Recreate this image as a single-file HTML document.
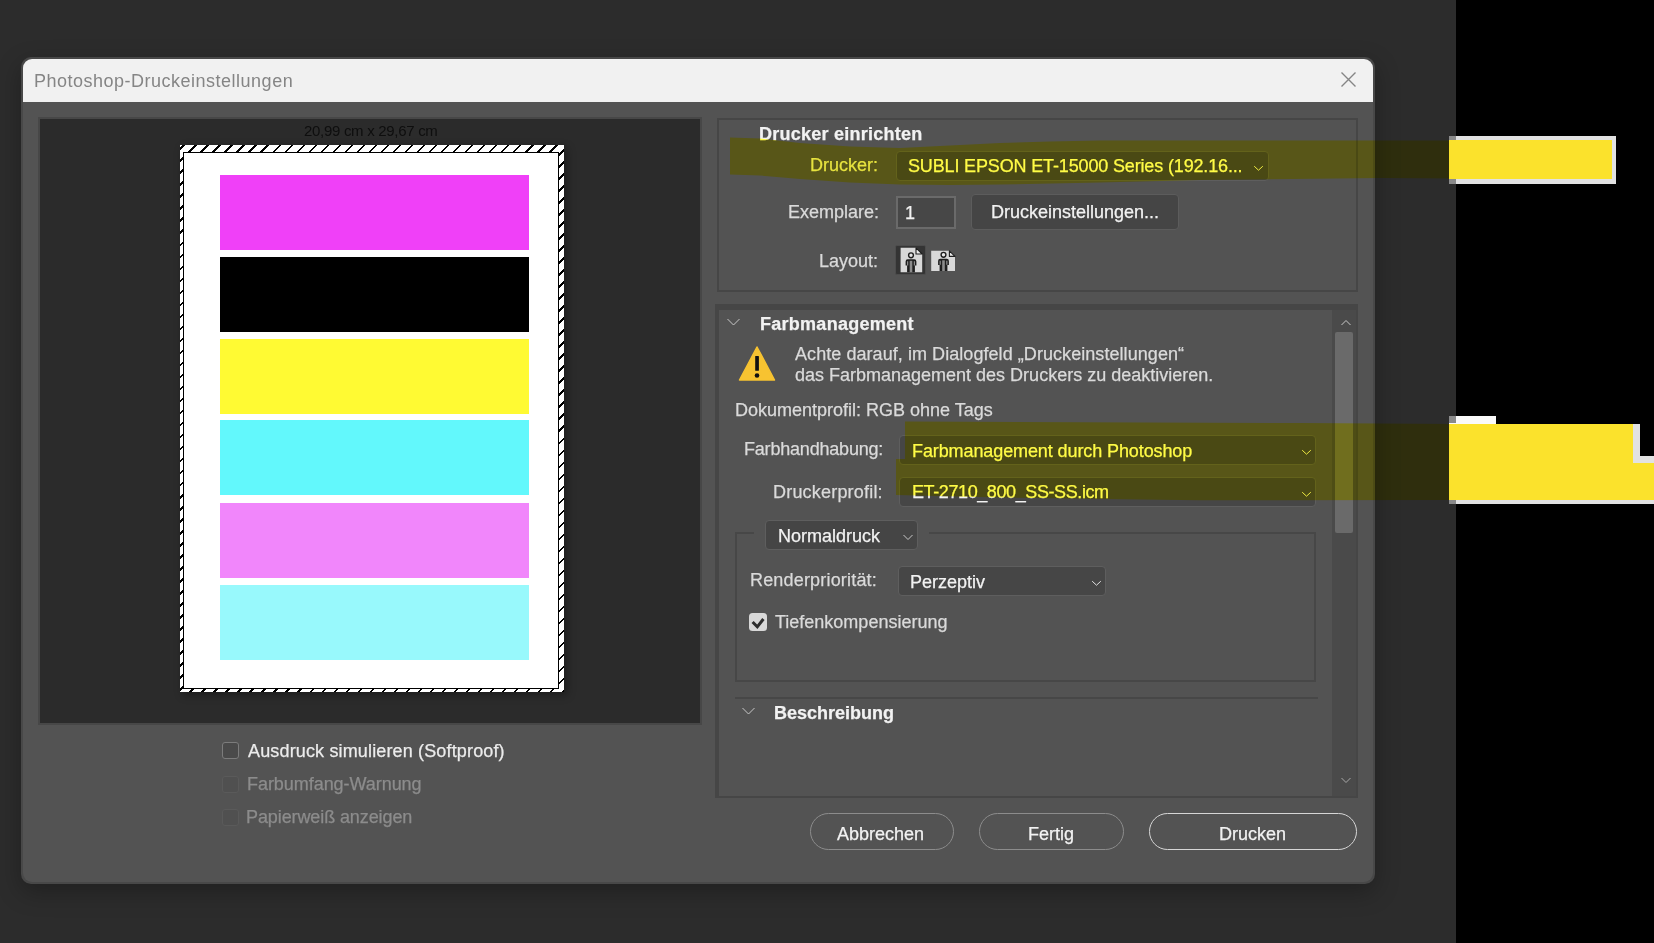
<!DOCTYPE html>
<html><head><meta charset="utf-8">
<style>
*{margin:0;padding:0;box-sizing:border-box}
html,body{width:1654px;height:943px;overflow:hidden;background:#2b2b2b;font-family:"Liberation Sans",sans-serif;position:relative}
.a{position:absolute}
.t{position:absolute;font-size:18px;line-height:20px;white-space:nowrap;color:#dadada;-webkit-text-stroke:0.25px currentColor}
.b{font-weight:700;color:#f2f2f2}
.sel{position:absolute;background:#464646;border:1px solid #5e5e5e;border-radius:4px}
.pill{position:absolute;border:1px solid #8c8c8c;border-radius:19px}
.cb{position:absolute;width:17px;height:17px;border:1.5px solid #7c7c7c;border-radius:3px;background:#4a4a4a}
</style></head><body>
<!-- background areas -->
<div class="a" style="left:0;top:0;width:1456px;height:943px;background:#2c2c2c"></div>
<div class="a" style="left:1456px;top:0;width:198px;height:943px;background:#000"></div>

<!-- dialog -->
<div class="a" style="left:21px;top:57px;width:1354px;height:827px;background:#484848;border-radius:10px;box-shadow:0 8px 24px rgba(0,0,0,0.28)"></div>
<div class="a" style="left:23px;top:59px;width:1350px;height:823px;background:#535353;border-radius:9px;overflow:hidden">
  <div class="a" style="left:0;top:0;width:1350px;height:43px;background:#f1f1f1"></div>
</div>
<div class="t" style="left:34px;top:71px;color:#858585;letter-spacing:0.5px;-webkit-text-stroke:0">Photoshop-Druckeinstellungen</div>
<svg class="a" style="left:1338px;top:69px" width="21" height="21" viewBox="0 0 21 21"><path d="M3.5 3.5L17.5 17.5M17.5 3.5L3.5 17.5" stroke="#858585" stroke-width="1.4"/></svg>

<!-- preview -->
<div class="a" style="left:38px;top:117px;width:664px;height:608px;background:#474747"></div>
<div class="a" style="left:40px;top:119px;width:660px;height:604px;background:#2b2b2b"></div>
<div class="t" style="left:304px;top:121px;font-size:15px;color:#0e0e0e;letter-spacing:-0.3px;-webkit-text-stroke:0">20,99 cm x 29,67 cm</div>
<div class="a" style="left:180px;top:145px;width:384px;height:547px;box-shadow:3px 3px 8px rgba(0,0,0,0.35)"></div>
<div class="a" style="left:180px;top:145px;width:384px;height:547px;background:repeating-linear-gradient(-45deg,#000 0,#000 1.8px,#fff 1.8px,#fff 8.5px)"></div>
<div class="a" style="left:183px;top:152px;width:376px;height:537px;background:#fff;border:1px solid #000"></div>
<div class="a" style="left:220px;top:175px;width:309px;height:75px;background:#f040f8"></div>
<div class="a" style="left:220px;top:257px;width:309px;height:75px;background:#000"></div>
<div class="a" style="left:220px;top:339px;width:309px;height:75px;background:#fffa33"></div>
<div class="a" style="left:220px;top:420px;width:309px;height:75px;background:#62f8fc"></div>
<div class="a" style="left:220px;top:503px;width:309px;height:75px;background:#f186fb"></div>
<div class="a" style="left:220px;top:585px;width:309px;height:75px;background:#98f9fc"></div>

<!-- checkboxes left -->
<div class="cb" style="left:222px;top:742px"></div>
<div class="t" style="left:248px;top:741px;color:#ececec;letter-spacing:0.15px">Ausdruck simulieren (Softproof)</div>
<div class="cb" style="left:222px;top:776px;border-color:#5a5a5a;background:#505050"></div>
<div class="t" style="left:247px;top:774px;color:#8c8c8c;letter-spacing:-0.05px">Farbumfang-Warnung</div>
<div class="cb" style="left:222px;top:809px;border-color:#5a5a5a;background:#505050"></div>
<div class="t" style="left:246px;top:807px;color:#8c8c8c;letter-spacing:-0.1px">Papierweiß anzeigen</div>

<!-- panel 1 -->
<div class="a" style="left:717px;top:118px;width:641px;height:174px;border:2px solid #464646"></div>
<div class="t b" style="left:759px;top:124px;letter-spacing:0.25px">Drucker einrichten</div>
<div class="t" style="left:810px;top:155px">Drucker:</div>
<div class="sel" style="left:896px;top:151px;width:373px;height:30px"></div>
<div class="t" style="left:908px;top:156px;color:#f2f2f2;letter-spacing:-0.15px">SUBLI EPSON ET-15000 Series (192.16...</div>
<svg class="a" style="left:1253px;top:164px" width="12" height="8"><path d="M1.2 2.2L5.5 6.2L9.8 2.2" stroke="#e2e2e2" stroke-width="1" fill="none"/></svg>
<div class="t" style="left:788px;top:202px">Exemplare:</div>
<div class="a" style="left:896px;top:196px;width:60px;height:33px;border:2px solid #6a6a6a;background:#474747"></div>
<div class="t" style="left:905px;top:203px;color:#f2f2f2">1</div>
<div class="a" style="left:971px;top:194px;width:208px;height:36px;background:#454545;border:1px solid #5c5c5c;border-radius:4px"></div>
<div class="t" style="left:991px;top:202px;color:#f2f2f2">Druckeinstellungen...</div>
<div class="t" style="left:819px;top:251px">Layout:</div>
<!-- layout icons -->
<svg class="a" style="left:895px;top:245px" width="62" height="31" viewBox="0 0 62 31">
  <rect x="0.5" y="0.5" width="30" height="29" rx="1.5" fill="#343434" stroke="#4c4c4c"/>
  <path d="M5.6 2.8H21L27.2 9V27.2H5.6Z" fill="#d8d8d8"/>
  <path d="M21 2.8L27.2 9H21Z" fill="#ececec" stroke="#1e1e1e" stroke-width="1.1" stroke-linejoin="round"/>
  <circle cx="16" cy="10.3" r="2.4" fill="#e6e6e6" stroke="#1e1e1e" stroke-width="1.4"/>
  <path d="M10.6 20.6V16.4Q10.6 14.3 12.7 14.3H19.3Q21.4 14.3 21.4 16.4V20.6H19.9V27.2H12.1V20.6Z" fill="#1e1e1e"/>
  <path d="M12.1 16.2H13.2V20.4H12.1Z M18.8 16.2H19.9V20.4H18.8Z" fill="#9a9a9a"/>
  <path d="M14.7 15.8H17.3V27.2H14.7Z" fill="#8c8c8c"/>
  <path d="M36.2 5.8H54.4L60 11.4V26H36.2Z" fill="#d8d8d8"/>
  <path d="M54.4 5.8L60 11.4H54.4Z" fill="#ececec" stroke="#1e1e1e" stroke-width="1.1" stroke-linejoin="round"/>
  <circle cx="48.5" cy="9.8" r="2.4" fill="#e6e6e6" stroke="#1e1e1e" stroke-width="1.4"/>
  <path d="M43.1 20V15.9Q43.1 13.8 45.2 13.8H51.8Q53.9 13.8 53.9 15.9V20H52.4V26H44.6V20Z" fill="#1e1e1e"/>
  <path d="M44.6 15.7H45.7V19.8H44.6Z M51.3 15.7H52.4V19.8H51.3Z" fill="#9a9a9a"/>
  <path d="M47.2 15.3H49.8V26H47.2Z" fill="#8c8c8c"/>
</svg>

<!-- panel 2 -->
<div class="a" style="left:715px;top:304px;width:643px;height:494px;background:#464646"></div>
<div class="a" style="left:719px;top:310px;width:637px;height:486px;background:#535353"></div>
<div class="a" style="left:1332px;top:310px;width:24px;height:486px;background:#4a4a4a"></div>
<svg class="a" style="left:1340px;top:319px" width="12" height="8"><path d="M1.5 6L6 1.5L10.5 6" stroke="#c8c8c8" stroke-width="1" fill="none"/></svg>
<div class="a" style="left:1335px;top:332px;width:18px;height:201px;background:#6a6a6a;border-radius:2px"></div>
<svg class="a" style="left:1340px;top:776px" width="12" height="8"><path d="M1.5 2L6 6.5L10.5 2" stroke="#a8a8a8" stroke-width="1" fill="none"/></svg>

<svg class="a" style="left:726px;top:317px" width="15" height="10"><path d="M1.5 2L7.5 8L13.5 2" stroke="#c8c8c8" stroke-width="1" fill="none"/></svg>
<div class="t b" style="left:760px;top:314px;letter-spacing:0.27px">Farbmanagement</div>
<svg class="a" style="left:738px;top:346px" width="38" height="36" viewBox="0 0 38 36">
  <path d="M19 1L36.5 34H1.5Z" fill="#f7c331" stroke="#f7c331" stroke-width="1.5" stroke-linejoin="round"/>
  <rect x="17.2" y="10" width="3.7" height="14.8" fill="#111" rx="0.5"/>
  <circle cx="19" cy="29.5" r="2.3" fill="#111"/>
</svg>
<div class="t" style="left:795px;top:344px;letter-spacing:0.06px">Achte darauf, im Dialogfeld „Druckeinstellungen“</div>
<div class="t" style="left:795px;top:365px">das Farbmanagement des Druckers zu deaktivieren.</div>
<div class="t" style="left:735px;top:400px">Dokumentprofil: RGB ohne Tags</div>

<div class="t" style="left:744px;top:439px;letter-spacing:-0.2px">Farbhandhabung:</div>
<div class="sel" style="left:899px;top:435px;width:417px;height:30px"></div>
<div class="t" style="left:912px;top:441px;color:#f2f2f2;letter-spacing:-0.1px">Farbmanagement durch Photoshop</div>
<svg class="a" style="left:1301px;top:448px" width="12" height="8"><path d="M1.2 2.2L5.5 6.2L9.8 2.2" stroke="#e2e2e2" stroke-width="1" fill="none"/></svg>
<div class="t" style="left:773px;top:482px;letter-spacing:0.2px">Druckerprofil:</div>
<div class="sel" style="left:899px;top:477px;width:417px;height:30px"></div>
<div class="t" style="left:912px;top:482px;color:#f2f2f2;letter-spacing:-0.4px">ET-2710_800_SS-SS.icm</div>
<svg class="a" style="left:1301px;top:490px" width="12" height="8"><path d="M1.2 2.2L5.5 6.2L9.8 2.2" stroke="#e2e2e2" stroke-width="1" fill="none"/></svg>

<!-- group box -->
<div class="a" style="left:735px;top:532px;width:581px;height:150px;border:2px solid #474747"></div>
<div class="a" style="left:754px;top:530px;width:175px;height:6px;background:#535353"></div>
<div class="sel" style="left:765px;top:520px;width:153px;height:30px;background:#454545"></div>
<div class="t" style="left:778px;top:526px;color:#f2f2f2">Normaldruck</div>
<svg class="a" style="left:902px;top:533px" width="12" height="8"><path d="M1.5 2L6 6.5L10.5 2" stroke="#c8c8c8" stroke-width="1" fill="none"/></svg>
<div class="t" style="left:750px;top:570px;letter-spacing:0.18px">Renderpriorität:</div>
<div class="sel" style="left:898px;top:566px;width:208px;height:30px"></div>
<div class="t" style="left:910px;top:572px;color:#f2f2f2">Perzeptiv</div>
<svg class="a" style="left:1091px;top:579px" width="12" height="8"><path d="M1.2 2.2L5.5 6.2L9.8 2.2" stroke="#e2e2e2" stroke-width="1" fill="none"/></svg>
<div class="a" style="left:749px;top:613px;width:18px;height:18px;background:#d8d8d8;border-radius:3.5px"></div>
<svg class="a" style="left:749px;top:613px" width="18" height="18"><path d="M3.6 9L8.3 13.8L14.4 6" stroke="#2e2e2e" stroke-width="3" fill="none"/></svg>
<div class="t" style="left:775px;top:612px">Tiefenkompensierung</div>

<div class="a" style="left:735px;top:697px;width:583px;height:2px;background:#474747"></div>
<svg class="a" style="left:741px;top:706px" width="15" height="10"><path d="M1.5 2L7.5 8L13.5 2" stroke="#c8c8c8" stroke-width="1" fill="none"/></svg>
<div class="t b" style="left:774px;top:703px">Beschreibung</div>

<!-- buttons -->
<div class="pill" style="left:810px;top:813px;width:144px;height:37px"></div>
<div class="t" style="left:837px;top:824px;color:#f2f2f2">Abbrechen</div>
<div class="pill" style="left:979px;top:813px;width:145px;height:37px"></div>
<div class="t" style="left:1028px;top:824px;color:#f2f2f2">Fertig</div>
<div class="pill" style="left:1149px;top:813px;width:208px;height:37px;border:1.6px solid #d6d6d6"></div>
<div class="t" style="left:1219px;top:824px;color:#f2f2f2">Drucken</div>

<!-- highlights (multiply) -->
<svg class="a" style="left:0;top:0;mix-blend-mode:multiply" width="1654" height="943"><g fill="#ffff48">
  <path d="M730 137.5L760 138.5L800 143L850 146.5L900 148L950 145.5L1000 143L1050 141.5L1100 140.5L1200 140.5L1456 140.5L1456 178.5L1380 178L1200 180L1100 182.5L1000 184.5L950 185L900 184.5L850 182.5L800 179L760 175.5L730 174.5Z"/>
  <path d="M905 421.5L1300 423L1456 424L1456 500L1200 500.2L1100 499L1000 497.4L896 495L896 459L905 459Z"/></g>
</svg>
<svg class="a" style="left:0;top:0;mix-blend-mode:color-dodge" width="1654" height="943"><g fill="#0e0a00">
  <path d="M730 137.5L760 138.5L800 143L850 146.5L900 148L950 145.5L1000 143L1050 141.5L1100 140.5L1200 140.5L1456 140.5L1456 178.5L1380 178L1200 180L1100 182.5L1000 184.5L950 185L900 184.5L850 182.5L800 179L760 175.5L730 174.5Z"/>
  <path d="M905 421.5L1300 423L1456 424L1456 500L1200 500.2L1100 499L1000 497.4L896 495L896 459L905 459Z"/></g>
</svg>
<!-- yellow boxes on black -->
<div class="a" style="left:1449px;top:136px;width:167px;height:48px;background:#e2e2e2"></div>
<div class="a" style="left:1449px;top:140px;width:163px;height:39px;background:#fbe22c"></div>
<div class="a" style="left:1449px;top:416px;width:47px;height:8px;background:#fafafa"></div>
<div class="a" style="left:1496px;top:424px;width:144px;height:2px;background:#e2e2e2"></div>
<div class="a" style="left:1633px;top:424px;width:7px;height:39px;background:#e2e2e2"></div>
<div class="a" style="left:1640px;top:456px;width:14px;height:7px;background:#e2e2e2"></div>
<div class="a" style="left:1449px;top:424px;width:184px;height:39px;background:#fbe22c"></div>
<div class="a" style="left:1449px;top:463px;width:205px;height:37px;background:#fbe22c"></div>
<div class="a" style="left:1449px;top:500px;width:205px;height:4px;background:#e2e2e2"></div>
<div class="a" style="left:1449px;top:136px;width:7px;height:4px;background:#8a8a8a"></div>
<div class="a" style="left:1449px;top:179px;width:7px;height:5px;background:#8a8a8a"></div>
<div class="a" style="left:1449px;top:416px;width:7px;height:7px;background:#8a8a8a"></div>
<div class="a" style="left:1449px;top:500px;width:7px;height:4px;background:#8a8a8a"></div>
</body></html>
